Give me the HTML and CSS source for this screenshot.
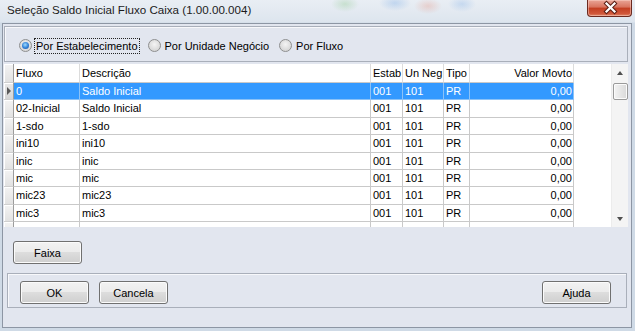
FILE: index.html
```html
<!DOCTYPE html>
<html lang="pt-BR">
<head>
    <meta charset="UTF-8">
    <title>Seleção Saldo Inicial Fluxo Caixa</title>
    <link rel="stylesheet" href="styles.css">
</head>
<body>
    <div class="window">
        <div class="titlebar">
            <span class="title">Seleção Saldo Inicial Fluxo Caixa (1.00.00.004)</span>
            <div class="close">
                <svg width="45" height="17" viewBox="0 0 45 17">
                    <path d="M18.5 4.5 L26.5 12.5 M26.5 4.5 L18.5 12.5" stroke="#5a1e14" stroke-width="4.2" stroke-linecap="square"/>
                    <path d="M18.5 4.5 L26.5 12.5 M26.5 4.5 L18.5 12.5" stroke="#fff" stroke-width="2.2" stroke-linecap="square"/>
                </svg>
            </div>
        </div>
        <div class="client">
            <div class="radio-box">
                <label class="radio checked"><span class="dot"></span><span class="lbl focus">Por Estabelecimento</span></label>
                <label class="radio"><span class="dot"></span><span class="lbl">Por Unidade Negócio</span></label>
                <label class="radio"><span class="dot"></span><span class="lbl">Por Fluxo</span></label>
            </div>

            <div class="grid">
                <div class="rows">
                    <div class="row head">
                        <div class="ind"></div><div>Fluxo</div><div>Descrição</div><div>Estab</div><div>Un Neg</div><div>Tipo</div><div class="num">Valor Movto</div><div class="fill"></div>
                    </div>
                    <div class="row sel">
                        <div class="ind"><span class="arrow"></span></div><div>0</div><div>Saldo Inicial</div><div>001</div><div>101</div><div>PR</div><div class="num">0,00</div><div class="fill"></div>
                    </div>
                    <div class="row">
                        <div class="ind"></div><div>02-Inicial</div><div>Saldo Inicial</div><div>001</div><div>101</div><div>PR</div><div class="num">0,00</div><div class="fill"></div>
                    </div>
                    <div class="row">
                        <div class="ind"></div><div>1-sdo</div><div>1-sdo</div><div>001</div><div>101</div><div>PR</div><div class="num">0,00</div><div class="fill"></div>
                    </div>
                    <div class="row">
                        <div class="ind"></div><div>ini10</div><div>ini10</div><div>001</div><div>101</div><div>PR</div><div class="num">0,00</div><div class="fill"></div>
                    </div>
                    <div class="row">
                        <div class="ind"></div><div>inic</div><div>inic</div><div>001</div><div>101</div><div>PR</div><div class="num">0,00</div><div class="fill"></div>
                    </div>
                    <div class="row">
                        <div class="ind"></div><div>mic</div><div>mic</div><div>001</div><div>101</div><div>PR</div><div class="num">0,00</div><div class="fill"></div>
                    </div>
                    <div class="row">
                        <div class="ind"></div><div>mic23</div><div>mic23</div><div>001</div><div>101</div><div>PR</div><div class="num">0,00</div><div class="fill"></div>
                    </div>
                    <div class="row">
                        <div class="ind"></div><div>mic3</div><div>mic3</div><div>001</div><div>101</div><div>PR</div><div class="num">0,00</div><div class="fill"></div>
                    </div>
                    <!-- próxima linha, só aparece o começo -->
                    <div class="row">
                        <div class="ind"></div><div></div><div></div><div></div><div></div><div></div><div class="num"></div><div class="fill"></div>
                    </div>
                </div>
                <div class="vscroll">
                    <div class="sb-btn"><span class="up"></span></div>
                    <div class="thumb"></div>
                    <div class="sb-track"></div>
                    <div class="sb-btn"><span class="down"></span></div>
                </div>
            </div>

            <div class="mid">
                <button class="btn">Faixa</button>
            </div>

            <div class="bottom-box">
                <button class="btn">OK</button>
                <button class="btn">Cancela</button>
                <button class="btn right">Ajuda</button>
            </div>
        </div>
    </div>
</body>
</html>
```

FILE: styles.css
```css
* { box-sizing: border-box; }
body { margin: 0; width: 635px; height: 331px; overflow: hidden; font-family: "Liberation Sans", Arial, sans-serif; font-size: 11px; color: #000; background: #d3dde8; }

.window { height: 331px; display: flex; flex-direction: column; padding: 0 3px 3px 2px;
    background:
        radial-gradient(ellipse 14px 8px at 345px 4px, rgba(140, 200, 140, 0.35), transparent),
        radial-gradient(ellipse 16px 8px at 395px 3px, rgba(120, 170, 230, 0.35), transparent),
        radial-gradient(ellipse 14px 8px at 428px 6px, rgba(230, 140, 120, 0.3), transparent),
        radial-gradient(ellipse 14px 8px at 462px 4px, rgba(120, 170, 230, 0.3), transparent),
        linear-gradient(#e9eef4, #dde5ee 22px, #cfdae6 23px, #cfdae6); }

.titlebar { height: 23px; display: flex; align-items: flex-start; }
.title { padding: 3px 0 0 5px; font-size: 11.6px; color: #1b1b1b; }
.close { margin-left: auto; width: 45px; height: 17px; border: 1px solid #6b2a20; border-top: none; border-radius: 0 0 4px 4px;
    background: linear-gradient(#e9a597, #d8735e 45%, #c23e22 50%, #d0573a 85%, #e08a6c); box-shadow: inset 0 0 0 1px rgba(255, 220, 210, 0.45); }
.close svg { display: block; margin-top: -1px; }

.client { flex: 1; background: #e2e6ef; border: 1px solid #8d96a4; display: flex; flex-direction: column; padding: 2px 3px 0 1px; }

.radio-box { height: 36px; border: 1px solid #a9afba; box-shadow: inset 1px 1px 0 #f7f8fb; display: flex; align-items: center; padding: 3px 0 0 14px; gap: 8px; }
.radio { display: flex; align-items: center; }
.dot { width: 13px; height: 13px; border-radius: 50%; border: 1px solid #8e8f8f; margin-right: 2px; position: relative;
    background: radial-gradient(circle at 50% 40%, #f4f4f4, #d8d8d8 70%, #ececec); }
.radio.checked .dot::after { content: ""; position: absolute; left: 2px; top: 2px; width: 7px; height: 7px; border-radius: 50%;
    background: radial-gradient(circle at 45% 40%, #9fdcff, #2f7fd6 55%, #1c4f9a); }
.lbl { padding: 1px 1px; border: 1px solid transparent; }
.lbl.focus { border: 1px dotted #222; }

.grid { margin-top: 2px; height: 163px; display: flex; background: #fff; overflow: hidden; }
.rows { flex: 1; overflow: hidden; }
.row { display: grid; grid-template-columns: 10px 66px 291px 32px 41px 26px 104px 1fr; height: 17.4px; }
.row > div { border-right: 1px solid #c9c9c9; border-bottom: 1px solid #c9c9c9; padding: 0 0 0 2px; line-height: 16px; white-space: nowrap; overflow: hidden; }
.row > .num { text-align: right; padding: 0 1px 0 0; }
.row > .fill { border: none; }
.row.head { height: 19px; }
.row.head > div { line-height: 18px; border-right-color: #dcdcdc; }
.row.head > .ind { border-right-color: #9c9c9c; }
.row > .ind { padding: 0; background: linear-gradient(#f3f3f3, #e2e2e2); border-right: 1px solid #9c9c9c; border-bottom: 1px solid #cfcfcf; box-shadow: inset 1px 1px 0 #fff; position: relative; }
.row.sel > div { background: #3399ff; color: #fff; border-right-color: #8cc2f7; border-bottom-color: #8cc2f7; }
.row.sel > .ind { background: linear-gradient(#e9e9e9, #d4d4d4); color: #000; border-right-color: #9c9c9c; border-bottom-color: #cfcfcf; }
.row.sel > .fill { background: #fff; }
.arrow { position: absolute; left: 3px; top: 4px; border-left: 4px solid #5a5a5a; border-top: 4px solid transparent; border-bottom: 4px solid transparent; }

.vscroll { width: 17px; display: flex; flex-direction: column; background: #f4f4f4; border-left: 1px solid #ececec; }
.sb-btn { height: 17px; display: flex; align-items: center; justify-content: center; }
.up { border-bottom: 4px solid #4f4f4f; border-left: 3.5px solid transparent; border-right: 3.5px solid transparent; }
.down { border-top: 4px solid #4f4f4f; border-left: 3.5px solid transparent; border-right: 3.5px solid transparent; }
.thumb { height: 17px; margin: 2px 0 0 1px; border: 1px solid #9a9a9a; border-radius: 2px; background: linear-gradient(90deg, #f3f3f3, #e6e6e6 50%, #d9d9d9); box-shadow: inset 0 0 0 1px #fbfbfb; }
.sb-track { flex: 1; }

.btn { width: 69px; height: 23px; padding: 0; border: 1px solid #707070; border-radius: 3px; font: 11px "Liberation Sans", Arial, sans-serif; color: #000;
    background: linear-gradient(#f2f2f2, #ebebeb 50%, #dddddd 50%, #cfcfcf); box-shadow: inset 0 0 0 1px #fbfbfb; }

.mid { padding: 14px 0 0 9px; height: 46px; }

.bottom-box { margin: 0 1px 0 3px; height: 35px; border: 1px solid #a9afba; box-shadow: inset 1px 1px 0 #f7f8fb; display: flex; align-items: flex-start; padding: 7px 15px 0 12px; gap: 10px; }
.bottom-box .right { margin-left: auto; }
```
